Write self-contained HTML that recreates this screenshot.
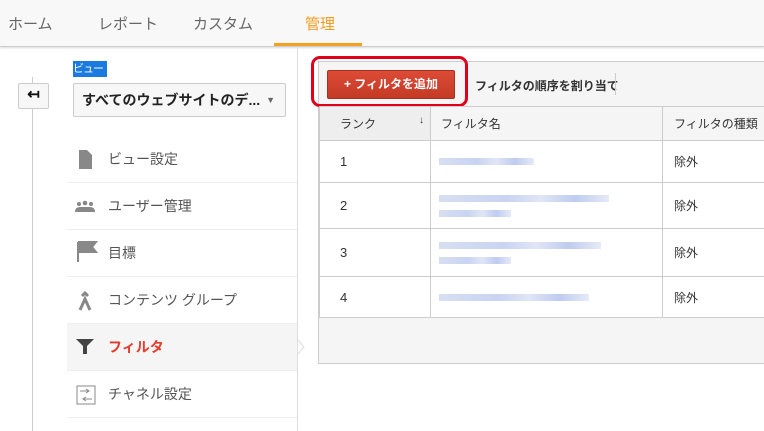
<!DOCTYPE html>
<html><head><meta charset="utf-8"><style>
*{margin:0;padding:0;box-sizing:border-box}
body{width:764px;height:431px;overflow:hidden;background:#fff;font-family:"Liberation Sans","Noto Sans CJK JP",sans-serif;position:relative;color:#333}
.a{position:absolute}
.nav{left:0;top:0;width:764px;height:47px;background:#f8f8f8;border-bottom:1px solid #ccc;box-shadow:0 1px 2px rgba(0,0,0,.15)}
.tab{top:13px;font-size:15px;color:#666}
.mi{left:67px;width:230px;height:47px;border-bottom:1px solid #eee;font-size:14px;color:#555;line-height:46px;padding-left:41px}
.blur{height:7px;background:linear-gradient(90deg,#d3dbf1,#c2cff0 40%,#dde3f5 60%,#b8c6ee 80%,#e3e8f6);opacity:.9}
td{border:1px solid #ccc;font-size:12px}
td.n{font-size:13px}
</style></head><body>
<div class="a nav"></div>
<div class="a tab" style="left:8px">ホーム</div>
<div class="a tab" style="left:98px">レポート</div>
<div class="a tab" style="left:193px">カスタム</div>
<div class="a tab" style="left:305px;color:#f39c1f">管理</div>
<div class="a" style="left:274px;top:43px;width:88px;height:3px;background:#f5a01f"></div>

<div class="a" style="left:32px;top:77px;width:1px;height:354px;background:#ccc"></div>
<div class="a" style="left:297px;top:48px;width:1px;height:383px;background:#ddd"></div>
<div class="a" style="left:18px;top:83px;width:31px;height:26px;border:1px solid #ccc;border-radius:2px;background:#f7f7f7;text-align:center;font-size:15px;font-weight:bold;line-height:22px;color:#111">↤</div>
<div class="a" style="left:73px;top:61px;width:34px;height:16px;background:#1a7ae0;color:#fff;font-size:11px;line-height:16px;white-space:nowrap;overflow:hidden;letter-spacing:-1px">ビュー</div>
<div class="a" style="left:73px;top:83px;width:213px;height:34px;border:1px solid #ccc;border-radius:2px;background:#f7f7f7;font-size:14px;font-weight:bold;line-height:32px;padding-left:8px;color:#222">すべてのウェブサイトのデ...<span style="position:absolute;right:10px;top:0;font-size:9px;color:#666">▼</span></div>

<div class="a mi" style="top:136px">ビュー設定</div>
<div class="a mi" style="top:183px">ユーザー管理</div>
<div class="a mi" style="top:230px">目標</div>
<div class="a mi" style="top:277px">コンテンツ グループ</div>
<div class="a mi" style="top:324px;background:#f5f5f5;color:#e53b2c;font-weight:bold">フィルタ</div>
<div class="a mi" style="top:371px">チャネル設定</div>
<svg class="a" style="left:0;top:0" width="320" height="431">
<path d="M79 150h8l5 5v14h-13z" fill="#888"/>
<g fill="#888"><circle cx="79" cy="204" r="2"/><circle cx="85" cy="203" r="2.3"/><circle cx="91" cy="204" r="2"/><path d="M75 212q0-5 5-5h10q5 0 5 5z"/></g>
<path d="M78 242v20M79 242h17l-4 5 4 5h-17z" stroke="#888" stroke-width="2" fill="#888"/>
<path d="M80 310l5-11 5 11M85 299v3M82 296l3-3 3 3" stroke="#888" stroke-width="3" fill="none"/>
<path d="M76 339h18l-7 7v8h-4v-8z" fill="#444"/>
<rect x="77" y="386" width="18" height="18" fill="none" stroke="#888"/>
<path d="M80 391h9M86 389l3 2-3 2M92 399h-9M86 397l-3 2 3 2" stroke="#888" fill="none"/>
<path d="M298 340l6 7-6 7" fill="#fff" stroke="#ddd"/>
</svg>

<div class="a" style="left:318px;top:61px;width:460px;height:303px;border:1px solid #ccc;background:#f5f5f5"></div>
<div class="a" style="left:327px;top:70px;width:128px;height:29px;background:linear-gradient(#dc4b36,#c43a25);border:1px solid #a8301f;border-radius:2px;color:#fff;font-size:12px;font-weight:bold;text-align:center;line-height:27px">+ フィルタを追加</div>
<div class="a" style="left:475px;top:77px;font-size:12px;font-weight:bold;color:#333;white-space:nowrap">フィルタの順序を割り当て</div>
<div class="a" style="left:615px;top:73px;width:1px;height:22px;background:#ccc"></div>
<div class="a" style="left:311px;top:56px;width:157px;height:51px;border:3px solid #e0001a;border-radius:9px"></div>

<table class="a" style="left:319px;top:106px;width:460px;border-collapse:collapse;background:#fff;table-layout:fixed">
<tr style="height:34px;background:#f5f5f5"><td style="width:111px;background:#eee;padding-left:20px">ランク<span style="float:right;margin-right:6px;font-size:10px">↓</span></td><td style="width:232px;padding-left:10px">フィルタ名</td><td style="padding-left:11px">フィルタの種類</td></tr>
<tr style="height:42px"><td class="n" style="padding-left:20px">1</td><td style="padding-left:8px"><div class="blur" style="width:95px"></div></td><td style="padding-left:11px">除外</td></tr>
<tr style="height:46px"><td class="n" style="padding-left:20px">2</td><td style="padding-left:8px"><div class="blur" style="width:170px;margin-bottom:8px"></div><div class="blur" style="width:72px"></div></td><td style="padding-left:11px">除外</td></tr>
<tr style="height:48px"><td class="n" style="padding-left:20px">3</td><td style="padding-left:8px"><div class="blur" style="width:162px;margin-bottom:8px"></div><div class="blur" style="width:72px"></div></td><td style="padding-left:11px">除外</td></tr>
<tr style="height:41px"><td class="n" style="padding-left:20px">4</td><td style="padding-left:8px"><div class="blur" style="width:150px"></div></td><td style="padding-left:11px">除外</td></tr>
</table>
</body></html>
